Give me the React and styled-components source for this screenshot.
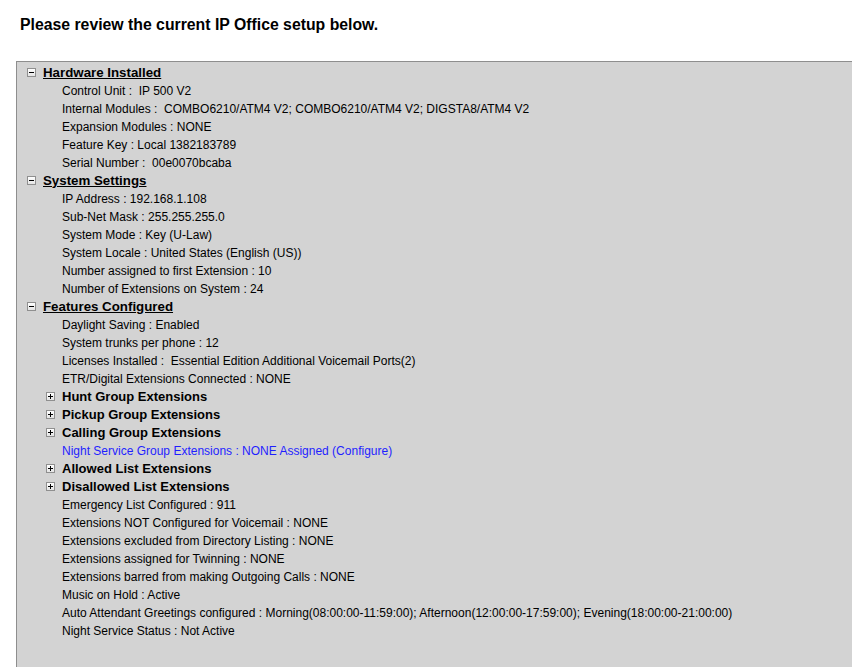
import React from 'react';
import styled, { createGlobalStyle } from 'styled-components';

const GlobalStyle = createGlobalStyle`
  html, body {
    margin: 0;
    padding: 0;
    background: #ffffff;
    height: 100%;
  }
  #root {
    height: 100%;
  }
`;

const Page = styled('div')`
  height: 100%;
  display: flex;
  flex-direction: column;
  font-family: 'Liberation Sans', Arial, sans-serif;
  color: #000;
`;

const Heading = styled('h1')`
  margin: 0;
  padding: 16px 0 0 20px;
  height: 61px;
  box-sizing: border-box;
  font-size: 15.8px;
  font-weight: 700;
  line-height: 18px;
  flex-shrink: 0;
`;

const Panel = styled('div')`
  flex: 1;
  margin-left: 16px;
  border-top: 1px solid #8e8e8e;
  border-left: 1px solid #8e8e8e;
  background: #d3d3d3;
  padding: 1px 0 0 10px;
`;

const Row = styled('div')`
  display: flex;
  align-items: center;
  height: 18px;
  box-sizing: border-box;
  padding-top: ${({ bold }) => (bold ? 0 : 2)}px;
  padding-left: ${({ level }) => level * 19}px;
  font-size: ${({ bold, level }) => (bold ? (level ? '13px' : '13.3px') : '12px')};
  font-weight: ${({ bold }) => (bold ? 700 : 400)};
  color: ${({ link }) => (link ? '#1f1fff' : '#000')};
  white-space: pre;
`;

const Title = styled('span')`
  text-decoration: ${({ underline }) => (underline ? 'underline' : 'none')};
`;

const Toggle = styled('span')`
  width: 9px;
  height: 9px;
  box-sizing: border-box;
  border: 1px solid #8f8f8f;
  background: linear-gradient(#ffffff, #e4e4e4);
  margin-right: 7px;
  flex-shrink: 0;
  position: relative;

  &::before {
    content: '';
    position: absolute;
    left: 1px;
    top: 3px;
    width: 5px;
    height: 1px;
    background: #000;
  }

  &::after {
    content: '';
    display: ${({ open }) => (open ? 'none' : 'block')};
    position: absolute;
    left: 3px;
    top: 1px;
    width: 1px;
    height: 5px;
    background: #000;
  }
`;

const Spacer = styled('span')`
  width: 16px;
  flex-shrink: 0;
`;

const tree = [
  {
    title: 'Hardware Installed',
    items: [
      'Control Unit :  IP 500 V2',
      'Internal Modules :  COMBO6210/ATM4 V2; COMBO6210/ATM4 V2; DIGSTA8/ATM4 V2',
      'Expansion Modules : NONE',
      'Feature Key : Local 1382183789',
      'Serial Number :  00e0070bcaba',
    ],
  },
  {
    title: 'System Settings',
    items: [
      'IP Address : 192.168.1.108',
      'Sub-Net Mask : 255.255.255.0',
      'System Mode : Key (U-Law)',
      'System Locale : United States (English (US))',
      'Number assigned to first Extension : 10',
      'Number of Extensions on System : 24',
    ],
  },
  {
    title: 'Features Configured',
    items: [
      'Daylight Saving : Enabled',
      'System trunks per phone : 12',
      'Licenses Installed :  Essential Edition Additional Voicemail Ports(2)',
      'ETR/Digital Extensions Connected : NONE',
      { group: 'Hunt Group Extensions' },
      { group: 'Pickup Group Extensions' },
      { group: 'Calling Group Extensions' },
      { link: 'Night Service Group Extensions : NONE Assigned (Configure)' },
      { group: 'Allowed List Extensions' },
      { group: 'Disallowed List Extensions' },
      'Emergency List Configured : 911',
      'Extensions NOT Configured for Voicemail : NONE',
      'Extensions excluded from Directory Listing : NONE',
      'Extensions assigned for Twinning : NONE',
      'Extensions barred from making Outgoing Calls : NONE',
      'Music on Hold : Active',
      'Auto Attendant Greetings configured : Morning(08:00:00-11:59:00); Afternoon(12:00:00-17:59:00); Evening(18:00:00-21:00:00)',
      'Night Service Status : Not Active',
    ],
  },
];

const renderItem = (item, i) => {
  if (typeof item === 'string') {
    return (
      <Row key={i} level={1}>
        <Spacer />
        {item}
      </Row>
    );
  }
  if (item.group) {
    return (
      <Row key={i} level={1} bold>
        <Toggle />
        <Title>{item.group}</Title>
      </Row>
    );
  }
  return (
    <Row key={i} level={1} link>
      <Spacer />
      {item.link}
    </Row>
  );
};

const App = () => (
  <Page>
    <GlobalStyle />
    <Heading>Please review the current IP Office setup below.</Heading>
    <Panel>
      {tree.map((section) => (
        <React.Fragment key={section.title}>
          <Row level={0} bold>
            <Toggle open />
            <Title underline>{section.title}</Title>
          </Row>
          {section.items.map(renderItem)}
        </React.Fragment>
      ))}
    </Panel>
  </Page>
);

export default App;
